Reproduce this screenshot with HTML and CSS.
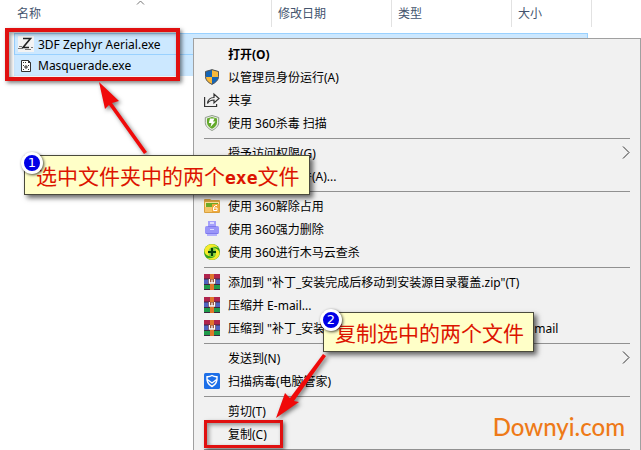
FILE: index.html
```html
<!DOCTYPE html>
<html lang="zh-CN">
<head>
    <meta charset="UTF-8">
    <meta name="viewport" content="width=device-width, initial-scale=1.0">
    <title>选中文件夹中的两个exe文件</title>
    <link rel="stylesheet" href="styles.css">
</head>
<body>
    <!-- WinRAR icon, shared by several menu items -->
    <svg class="defs" width="0" height="0">
        <symbol id="rar" viewBox="0 0 16 16">
            <path fill="#b0244c" d="M0 0h16v5H0z"/>
            <path fill="#4f63c0" d="M0 5h16v5H0z"/>
            <path fill="#1f9a4a" d="M0 10h16v6H0z"/>
            <path fill="#3b2740" d="M0 4.500h16v1H0zM0 10h16v1H0zM0 15h16v1H0z"/>
            <path fill="#e0762b" d="M6 0h4v16H6z"/>
            <path fill="#8a3a1c" d="M4.500 5h7v5h-7z"/>
            <path fill="none" stroke="#fff" stroke-width="1.300" d="M5.500 5v4h5V5M8 5.500V9"/>
        </symbol>
    </svg>

    <!-- File list -->
    <table class="files">
        <thead>
            <tr>
                <th class="col-name">名称
                    <svg class="sort" width="9" height="5" viewBox="0 0 9 5"><path d="M1 4.500 4.500 1 8 4.500" fill="none" stroke="#777"/></svg>
                </th>
                <th class="col-date">修改日期</th>
                <th class="col-type">类型</th>
                <th class="col-size">大小</th>
            </tr>
        </thead>
    </table>
    <ul class="rows">
        <li class="row focused">
            <svg width="16" height="16" viewBox="0 0 16 16">
                <path fill="#f3f3f3" d="M0 0h16v16H0z"/>
                <path fill="none" stroke="#222" stroke-width="1.600" d="M5 2.500h7.500L5 11.500h6"/>
                <path stroke="#777" d="M0 12.500h5M7 13.500h6M1 10.500h3M13 11.500h2"/>
            </svg>
            3DF Zephyr Aerial.exe
        </li>
        <li class="row">
            <svg width="16" height="16" viewBox="0 0 16 16">
                <path fill="#fff" stroke="#333" d="M3.500 2.500h7l2 2v9h-9z"/>
                <path fill="#333" d="M10 2v3h3zM5 4h1v1H5zM7 4h1v1H7zM5 11h1v1H5zM10 11h1v1h-1zM10 7h1v1h-1zM5 7h1v1H5z"/>
                <path stroke="#333" d="M8 7v4M6 9h4"/>
            </svg>
            Masquerade.exe
        </li>
    </ul>

    <!-- Context menu -->
    <div class="menu">
        <button class="item default">打开(O)</button>
        <button class="item">
            <svg class="icon" viewBox="0 0 16 16">
                <path fill="#1565b5" d="M8 .5 1.500 2.500v5C1.500 11.500 5 14 8 15.500c3-1.500 6.500-4 6.500-8v-5z"/>
                <path fill="#f8b83a" d="M8 .5v7.500h6.500V2.500zM8 8H1.500c.3 4 3.500 6 6.500 7.500z"/>
                <path fill="none" stroke="#555" d="M8 .7 1.500 2.500v5C1.500 11.500 5 14 8 15.300c3-1.300 6.500-3.800 6.500-7.800v-5z"/>
            </svg>
            以管理员身份运行(A)
        </button>
        <button class="item">
            <svg class="icon" viewBox="0 0 16 16">
                <path fill="none" stroke="#333" stroke-width="1.200" d="M.6 5v9.500h12V12M3.500 11.500c.5-4 3-6 6.500-6V2l5 4.500-5 4.500V8c-3 0-5 1-6.500 3.500z"/>
            </svg>
            共享
        </button>
        <button class="item">
            <svg class="icon" viewBox="0 0 16 16">
                <path fill="#e8eee4" stroke="#8f9b8a" d="M8 .5 1.300 2.500v5C1.300 11.500 5 14 8 15.500c3-1.500 6.700-4 6.700-8v-5z"/>
                <path fill="#63a92a" d="M8 2 3 3.500v4c0 3 2.500 5 5 6.300 2.500-1.300 5-3.300 5-6.300v-4z"/>
                <path fill="#fff" d="M6 3.500h4.500L9 6.500h2.500L6.500 12l1-4H4.800z"/>
            </svg>
            使用 360杀毒 扫描
        </button>
        <hr>
        <button class="item">授予访问权限(G)
            <svg class="more" viewBox="0 0 8 13"><path d="M1 .5 7 6.500 1 12.500" fill="none" stroke="#333"/></svg>
        </button>
        <button class="item">添加到压缩文件(A)...</button>
        <hr>
        <button class="item">
            <svg class="icon" viewBox="0 0 16 16">
                <path fill="#d9a03c" d="M0 2q0-1 1-1h5l1.500 1H15q1 0 1 1v11q0 1-1 1H1q-1 0-1-1z"/>
                <path fill="#fbe29a" d="M1 4h14v10H1z"/>
                <path fill="#6bab28" d="M2 5h12v4H2z"/>
                <path fill="#f5c56a" d="M1 9h14v5H1z"/>
                <path fill="#f0a83c" d="M8 6h7v8H8z"/>
                <path fill="none" stroke="#fff" d="M13 7.500h-1.500l-2 2v3h3.500v-2.500h-3.500"/>
            </svg>
            使用 360解除占用
        </button>
        <button class="item">
            <svg class="icon" viewBox="0 0 16 16">
                <path fill="#a5a0fa" d="M4 0h8v6H4z"/>
                <rect x="1" y="5" width="14" height="8" rx="1.500" fill="#9a95f8"/>
                <path fill="#b3b0fc" d="M3 12h10v3H3z"/>
                <path fill="#7f7aec" d="M4 5h8v1H4zM2 12h12v1H2z"/>
                <path fill="#dcdbff" d="M6 1h4v2H6zM6 8h4v1H6z"/>
            </svg>
            使用 360强力删除
        </button>
        <button class="item">
            <svg class="icon" viewBox="0 0 16 16">
                <circle cx="8" cy="8" r="8" fill="#3aa51a"/>
                <circle cx="8" cy="8" r="5" fill="#8fd63a"/>
                <path fill="#f8ea2a" d="M.5 6C1.500 1.500 6-.5 10 .5 12 1 13.500 2.500 14 4 10 1.500 5.500 3 4.500 6.500 4 9 4.500 10.500 5.500 12 2 11.500 0 9 .5 6zM15.500 10c-1 4.500-5.500 6.500-9.500 5.500-1-.3-2-.8-2.500-1.500 4 1 8-.5 8.500-4.500.3-2 0-3.500-1-5 3 .5 5 3 4.500 5.500z"/>
                <path stroke="#073f0c" stroke-width="2.200" d="M8 4v8M4 8h8"/>
            </svg>
            使用 360进行木马云查杀
        </button>
        <hr>
        <button class="item"><svg class="icon"><use href="#rar"/></svg>添加到 "补丁_安装完成后移动到安装源目录覆盖.zip"(T)</button>
        <button class="item"><svg class="icon"><use href="#rar"/></svg>压缩并 E-mail...</button>
        <button class="item"><svg class="icon"><use href="#rar"/></svg>压缩到 "补丁_安装完成后移动到安装源目录覆盖.zip" 并 E-mail</button>
        <hr>
        <button class="item">发送到(N)
            <svg class="more" viewBox="0 0 8 13"><path d="M1 .5 7 6.500 1 12.500" fill="none" stroke="#333"/></svg>
        </button>
        <button class="item">
            <svg class="icon" viewBox="0 0 16 16">
                <rect width="16" height="16" rx="1.500" fill="#1d6fe8"/>
                <path fill="none" stroke="#fff" stroke-width="1.400" d="M8 2.500q-2.500 1.500-5 1.200C2.500 8.500 4 11.500 8 13.500c4-2 5.500-5 5-9.800q-2.500.3-5-1.200zM3.300 6.500 8 10l4.700-3.500"/>
            </svg>
            扫描病毒(电脑管家)
        </button>
        <hr>
        <button class="item">剪切(T)</button>
        <button class="item">复制(C)</button>
        <hr>
    </div>

    <!-- Step markers drawn over the window -->
    <div class="frame frame-files"></div>
    <div class="frame frame-copy"></div>
    <svg class="arrow arrow-files" width="52" height="74" viewBox="0 0 52 74">
        <path fill="#f00a0a" d="M2 1 22 20 15 22 50 71 47 73 12 24 8 28z"/>
    </svg>
    <div class="note note-files"><span class="badge">1</span>选中文件夹中的两个<b>exe</b>文件</div>
    <div class="note note-copy"><span class="badge">2</span>复制选中的两个文件</div>
    <svg class="arrow arrow-copy" width="54" height="68" viewBox="0 0 54 68">
        <path fill="#f00a0a" d="M1 66 10 41 15 46 48 2 51 4 19 49 24 50z"/>
    </svg>
    <a class="site" href="#">Downyi.com</a>
</body>
</html>
```
FILE: styles.css
```css
* {
    box-sizing: border-box;
}

body {
    position: relative;
    min-height: 100vh;
    margin: 0;
    overflow: hidden;
    background: #fff;
    color: #000;
    font-family: "Noto Sans", "Noto Sans CJK SC", sans-serif;
    font-size: 12px;
}

.defs {
    position: absolute;
}

/* File list */
.files {
    width: 592px;
    table-layout: fixed;
    border-spacing: 0;
}

.files th {
    height: 27px;
    padding: 0 0 0 6px;
    border-right: 1px solid #e2e2e2;
    color: #44546e;
    font-weight: normal;
    line-height: 26px;
    text-align: left;
}

.files .col-name {
    position: relative;
    width: 272px;
    padding-left: 17px;
}

.files .col-date,
.files .col-type {
    width: 120px;
}

.sort {
    position: absolute;
    top: 0;
    left: 50%;
}

.rows {
    width: 574px;
    margin: 6px 0 0 14px;
    padding: 0;
    list-style: none;
}

.row {
    display: flex;
    align-items: center;
    gap: 4px;
    height: 21px;
    padding-left: 3px;
    border: 1px solid #cce8ff;
    background: #cce8ff;
}

.row.focused {
    height: 22px;
    border-color: #99d1ff;
}

/* Context menu */
.menu {
    position: absolute;
    top: 38px;
    left: 193px;
    right: 0;
    padding: 4px 10px;
    border: 1px solid #a0a0a0;
    background: #f1f1f1;
}

.item {
    display: flex;
    align-items: center;
    gap: 8px;
    width: 100%;
    height: 23px;
    padding: 0 0 2px 24px;
    border: 0;
    background: none;
    color: #000;
    font: inherit;
    text-align: left;
    white-space: nowrap;
}

.item:has(.icon) {
    padding-left: 0;
}

.item.default {
    font-weight: bold;
}

.icon {
    flex: none;
    width: 16px;
    height: 16px;
}

.more {
    width: 8px;
    height: 13px;
    margin-left: auto;
}

.menu hr {
    height: 1px;
    margin: 3px 0;
    border: 0;
    background: #919191;
}

/* Step markers */
.frame {
    position: absolute;
    border: 4px solid #e01010;
    box-shadow: 2px 2px 4px rgba(0, 0, 0, 0.5), inset 2px 2px 4px rgba(0, 0, 0, 0.4);
}

.frame-files {
    top: 28px;
    left: 5px;
    width: 175px;
    height: 53px;
}

.frame-copy {
    top: 420px;
    left: 204px;
    width: 79px;
    height: 28px;
    border-width: 3px;
}

.note {
    position: absolute;
    height: 40px;
    padding: 0 9px 0 11px;
    border: 1px solid #4a4a3c;
    background: #ffffc8;
    box-shadow: 3px 3px 5px rgba(0, 0, 0, 0.6);
    color: #dc1400;
    font-family: "Noto Sans CJK SC", sans-serif;
    font-size: 21px;
    line-height: 38px;
    white-space: nowrap;
}

.note b {
    font-family: "DejaVu Sans Mono", monospace;
    font-size: 18px;
}

.note-files {
    top: 155px;
    left: 24px;
}

.note-copy {
    top: 312px;
    left: 323px;
}

.badge {
    position: absolute;
    top: -4px;
    left: -4px;
    width: 22px;
    height: 22px;
    border: 3px solid #fff;
    border-radius: 50%;
    background: #0000e6;
    box-shadow: 1px 1px 3px rgba(0, 0, 0, 0.7);
    color: #fff;
    font-family: "DejaVu Sans", sans-serif;
    font-size: 13px;
    line-height: 16px;
    text-align: center;
}

.arrow {
    position: absolute;
    filter: drop-shadow(2px 2px 2px rgba(0, 0, 0, 0.5));
}

.arrow-files {
    top: 81px;
    left: 97px;
}

.arrow-copy {
    top: 352px;
    left: 275px;
}

.site {
    position: absolute;
    right: 16px;
    bottom: 8px;
    color: #ee7a18;
    font-family: Lato, sans-serif;
    font-size: 24px;
    font-weight: 500;
    line-height: 30px;
    text-decoration: none;
}
```
